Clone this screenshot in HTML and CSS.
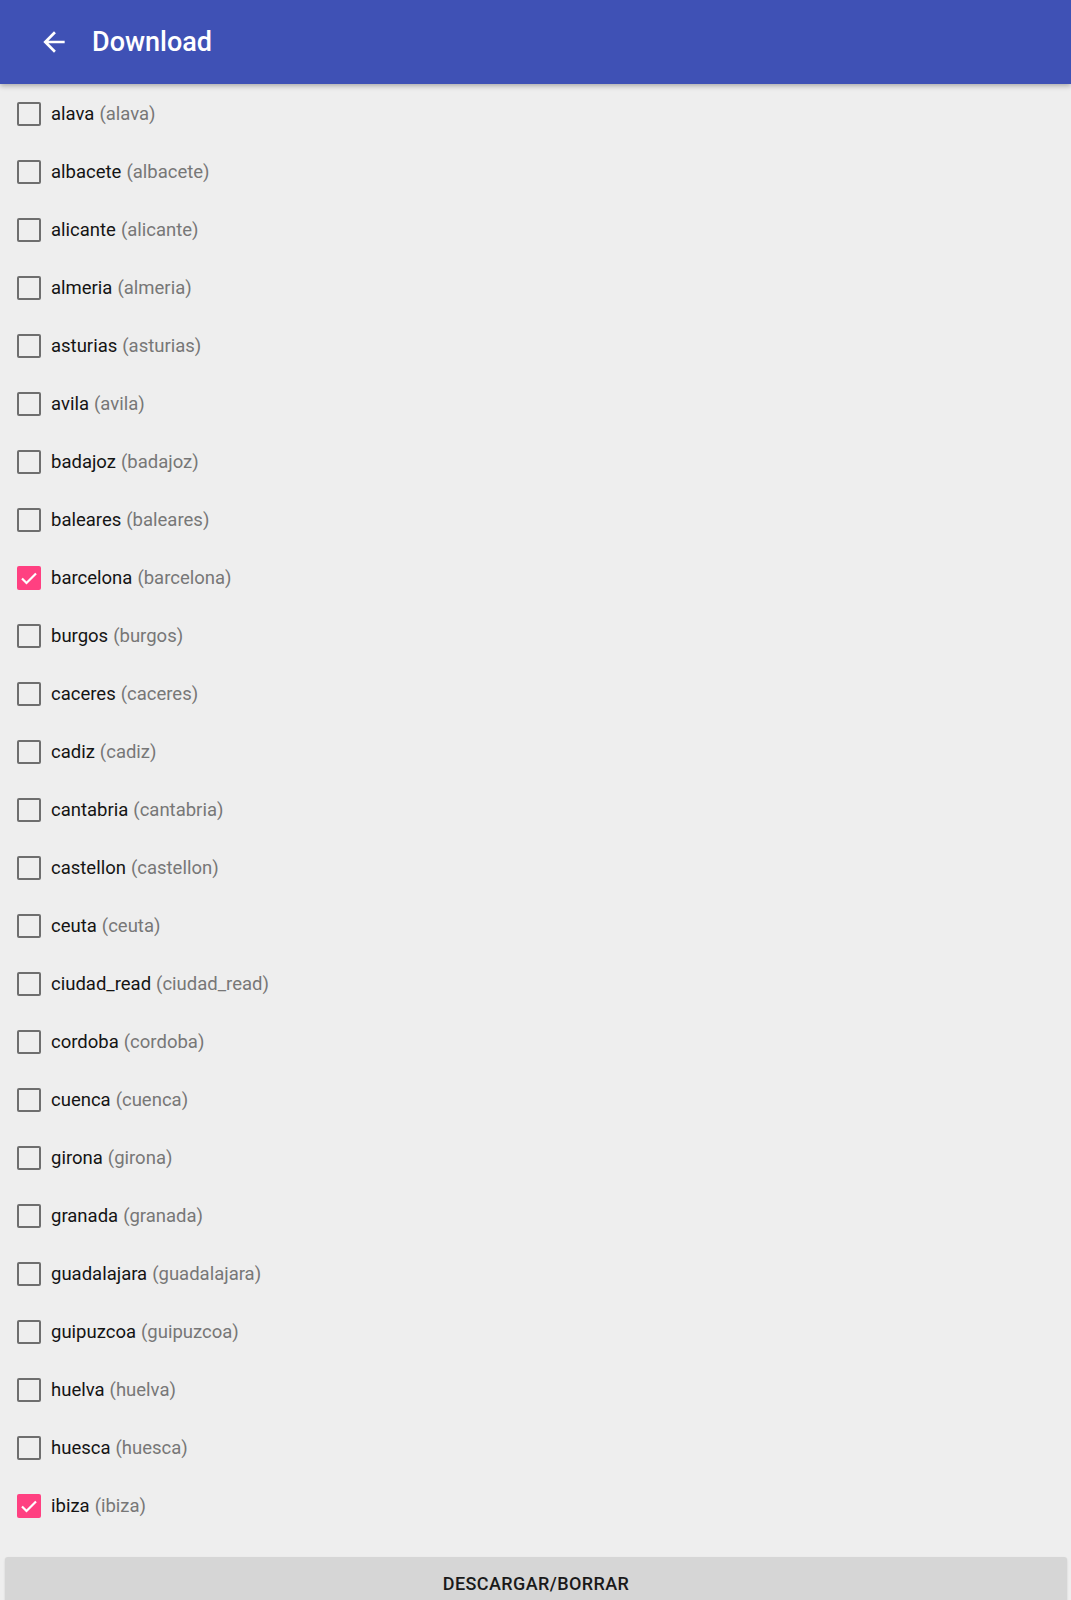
FILE: index.html
```html
<!DOCTYPE html>
<html lang="es">
<head>
<meta charset="utf-8">
<title>Download</title>
<link rel="stylesheet" href="styles.css">
</head>
<body>
<header class="appbar">
  <svg class="back" viewBox="0 0 24 24" width="32" height="32" aria-hidden="true"><path fill="#fff" d="M20 11H7.83l5.59-5.59L12 4l-8 8 8 8 1.41-1.41L7.83 13H20v-2z"/></svg>
  <h1 class="title">Download</h1>
</header>
<main class="content">
  <ul class="list">
    <li class="row"><span class="box"></span><span class="name">alava</span><span class="sub">(alava)</span></li>
    <li class="row"><span class="box"></span><span class="name">albacete</span><span class="sub">(albacete)</span></li>
    <li class="row"><span class="box"></span><span class="name">alicante</span><span class="sub">(alicante)</span></li>
    <li class="row"><span class="box"></span><span class="name">almeria</span><span class="sub">(almeria)</span></li>
    <li class="row"><span class="box"></span><span class="name">asturias</span><span class="sub">(asturias)</span></li>
    <li class="row"><span class="box"></span><span class="name">avila</span><span class="sub">(avila)</span></li>
    <li class="row"><span class="box"></span><span class="name">badajoz</span><span class="sub">(badajoz)</span></li>
    <li class="row"><span class="box"></span><span class="name">baleares</span><span class="sub">(baleares)</span></li>
    <li class="row"><span class="box checked"><svg viewBox="0 0 24 24" width="24" height="24"><path d="M5 12.5l4.5 4.5L19 7.5" fill="none" stroke="#fff" stroke-width="2.2"/></svg></span><span class="name">barcelona</span><span class="sub">(barcelona)</span></li>
    <li class="row"><span class="box"></span><span class="name">burgos</span><span class="sub">(burgos)</span></li>
    <li class="row"><span class="box"></span><span class="name">caceres</span><span class="sub">(caceres)</span></li>
    <li class="row"><span class="box"></span><span class="name">cadiz</span><span class="sub">(cadiz)</span></li>
    <li class="row"><span class="box"></span><span class="name">cantabria</span><span class="sub">(cantabria)</span></li>
    <li class="row"><span class="box"></span><span class="name">castellon</span><span class="sub">(castellon)</span></li>
    <li class="row"><span class="box"></span><span class="name">ceuta</span><span class="sub">(ceuta)</span></li>
    <li class="row"><span class="box"></span><span class="name">ciudad_read</span><span class="sub">(ciudad_read)</span></li>
    <li class="row"><span class="box"></span><span class="name">cordoba</span><span class="sub">(cordoba)</span></li>
    <li class="row"><span class="box"></span><span class="name">cuenca</span><span class="sub">(cuenca)</span></li>
    <li class="row"><span class="box"></span><span class="name">girona</span><span class="sub">(girona)</span></li>
    <li class="row"><span class="box"></span><span class="name">granada</span><span class="sub">(granada)</span></li>
    <li class="row"><span class="box"></span><span class="name">guadalajara</span><span class="sub">(guadalajara)</span></li>
    <li class="row"><span class="box"></span><span class="name">guipuzcoa</span><span class="sub">(guipuzcoa)</span></li>
    <li class="row"><span class="box"></span><span class="name">huelva</span><span class="sub">(huelva)</span></li>
    <li class="row"><span class="box"></span><span class="name">huesca</span><span class="sub">(huesca)</span></li>
    <li class="row"><span class="box checked"><svg viewBox="0 0 24 24" width="24" height="24"><path d="M5 12.5l4.5 4.5L19 7.5" fill="none" stroke="#fff" stroke-width="2.2"/></svg></span><span class="name">ibiza</span><span class="sub">(ibiza)</span></li>
  </ul>
  <button class="action" type="button">DESCARGAR/BORRAR</button>
</main>
</body>
</html>
```

FILE: styles.css
```css
html, body {
  margin: 0;
  padding: 0;
}
body {
  background: #eeeeee;
  font-family: Roboto, "Noto Sans", "Liberation Sans", sans-serif;
  height: 1600px;
  overflow: hidden;
}
.appbar {
  height: 84px;
  background: #3f51b5;
  display: flex;
  align-items: center;
  padding-left: 38px;
  box-shadow: 0 2px 5px rgba(0, 0, 0, 0.28);
  position: relative;
  z-index: 1;
}
.back {
  display: block;
  flex: none;
}
.title {
  margin: 0 0 0 22px;
  color: #ffffff;
  font-size: 27px;
  font-weight: 500;
  line-height: 1;
}
.content {
  display: flex;
  flex-direction: column;
}
.list {
  list-style: none;
  margin: 0;
  padding: 1px 0 0 0;
}
.row {
  height: 58px;
  display: flex;
  align-items: center;
  padding-left: 17px;
  font-size: 18.5px;
}
.box {
  width: 24px;
  height: 24px;
  box-sizing: border-box;
  border: 2.5px solid #6e6e6e;
  border-radius: 2px;
  margin-right: 10px;
  flex: none;
  display: flex;
  align-items: center;
  justify-content: center;
}
.box.checked {
  background: #ff4081;
  border: none;
}
.box svg {
  display: block;
}
.name {
  color: #141414;
}
.sub {
  color: #777777;
  margin-left: 5px;
}
.action {
  margin: 22px 4px 0 5px;
  height: 52px;
  background: #d6d6d6;
  border: none;
  border-radius: 3px;
  box-shadow: 0 1px 2px rgba(0, 0, 0, 0.15);
  font-family: Roboto, "Noto Sans", sans-serif;
  font-size: 18px;
  font-weight: 500;
  letter-spacing: 0.4px;
  color: #1a1a1a;
  padding: 0;
}
```
